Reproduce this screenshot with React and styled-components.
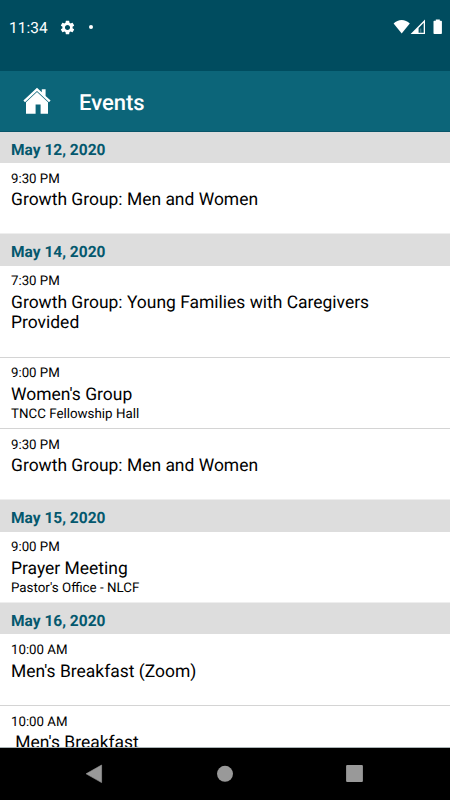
import React from "react";
import styled, { createGlobalStyle } from "styled-components";
import { MdSettings } from "react-icons/md";

const GlobalStyle = createGlobalStyle`
  body {
    margin: 0;
    font-family: Roboto, sans-serif;
    text-rendering: geometricPrecision;
    color: #000000;
    background: #ffffff;
  }
`;

const Screen = styled.div`
  display: flex;
  flex-direction: column;
  width: 450px;
  height: 800px;
  overflow: hidden;
`;

const StatusBar = styled.div`
  display: flex;
  flex: none;
  align-items: center;
  box-sizing: border-box;
  height: 71px;
  padding: 0 8px 17px 9px;
  color: #ffffff;
  background: #004c5f;
`;

const Clock = styled.span`
  width: 49.5px;
  margin-top: 2px;
  font-size: 15.4px;
  letter-spacing: 0.1px;
  line-height: 18px;
`;

const Dot = styled.span`
  width: 4px;
  height: 4px;
  margin-left: 13.5px;
  border-radius: 50%;
  background: #ffffff;
`;

const StatusIcons = styled.svg`
  margin-left: auto;
`;

const AppBar = styled.header`
  display: flex;
  flex: none;
  align-items: center;
  box-sizing: border-box;
  height: 60.6px;
  padding-left: 23px;
  color: #ffffff;
  background: #0c6579;
  border-bottom: 1px solid #085569;
`;

const Title = styled.h1`
  margin: 7px 0 0 28px;
  font-weight: 500;
  font-size: 22px;
  line-height: 26px;
`;

const List = styled.main`
  flex: 1;
  min-height: 0;
  overflow: hidden;
`;

const DateHeader = styled.h2`
  box-sizing: border-box;
  height: 31.3px;
  margin: 0;
  padding: 8.1px 11px 0;
  font-weight: 700;
  font-size: 15.5px;
  line-height: 20px;
  color: #05586e;
  background: #dddddd;
`;

const Event = styled.div`
  box-sizing: border-box;
  height: ${(props) => (props.$tall ? "92px" : "71.4px")};
  padding: 8.8px 11px 0;
  border-bottom: 1px solid ${(props) => (props.$last ? "#eeeeee" : "#d4d4d4")};
`;

const Time = styled.div`
  font-size: 13.25px;
  line-height: 16px;
`;

const Name = styled.div`
  width: 400px;
  margin-top: 2.7px;
  font-size: 17.47px;
  line-height: 20.3px;
  white-space: pre-wrap;
`;

const Place = styled.div`
  margin-top: 2px;
  font-size: 13.35px;
  line-height: 16px;
`;

const NavBar = styled.nav`
  display: flex;
  flex: none;
  justify-content: center;
  height: 53px;
  background: #000000;
  border-top: 1px solid #aab4b6;
  box-sizing: border-box;
`;

const days = [
  {
    date: "May 12, 2020",
    events: [{ time: "9:30 PM", name: "Growth Group: Men and Women" }],
  },
  {
    date: "May 14, 2020",
    events: [
      {
        time: "7:30 PM",
        name: "Growth Group: Young Families with Caregivers Provided",
        tall: true,
      },
      { time: "9:00 PM", name: "Women's Group", place: "TNCC Fellowship Hall" },
      { time: "9:30 PM", name: "Growth Group: Men and Women" },
    ],
  },
  {
    date: "May 15, 2020",
    events: [
      { time: "9:00 PM", name: "Prayer Meeting", place: "Pastor's Office - NLCF" },
    ],
  },
  {
    date: "May 16, 2020",
    events: [
      { time: "10:00 AM", name: "Men's Breakfast (Zoom)" },
      { time: "10:00 AM", name: " Men's Breakfast" },
    ],
  },
];

function HomeIcon() {
  return (
    <svg width="28" height="28" viewBox="0 0 28 28" fill="#ffffff">
      <path d="M14 .8 18.8 5.3V2.2h3.8v6.7L27.6 13.5 26 15.2 14 3.9 2 15.2.4 13.5Z" />
      <path d="M14 5 25 15.3v11.5h-7.4v-9.4h-5v9.4H3V15.3Z" />
    </svg>
  );
}

export default function App() {
  return (
    <Screen>
      <GlobalStyle />
      <StatusBar>
        <Clock>11:34</Clock>
        <MdSettings size={17} />
        <Dot />
        <StatusIcons width="49" height="16" viewBox="0 0 49 16" fill="#ffffff">
          <path d="M.6 4.6C5-.2 12.4-.2 16.8 4.6L8.7 14.6Z" />
          <path
            fillRule="evenodd"
            d="M17.6 15 32 .6v14.4ZM25.6 13.7h5.1V3.8l-5.1 5.1Z"
          />
          <path d="M26.8 9.5h1.6v4.2h-1.6Z" opacity=".25" />
          <path d="M42.8.5h4v1.3h1.3q.8 0 .8.8v11.6q0 .8-.8.8h-6.8q-.8 0-.8-.8V2.6q0-.8.8-.8h1.5Z" />
        </StatusIcons>
      </StatusBar>
      <AppBar>
        <HomeIcon />
        <Title>Events</Title>
      </AppBar>
      <List>
        {days.map((day) => (
          <section key={day.date}>
            <DateHeader>{day.date}</DateHeader>
            {day.events.map((event, index) => (
              <Event
                key={index}
                $tall={event.tall}
                $last={index === day.events.length - 1}
              >
                <Time>{event.time}</Time>
                <Name>{event.name}</Name>
                {event.place && <Place>{event.place}</Place>}
              </Event>
            ))}
          </section>
        ))}
      </List>
      <NavBar>
        <svg width="450" height="52" viewBox="0 748 450 52" fill="#999999">
          <path d="M86.1 773.8 101.6 765v17.6Z" stroke="#999999" strokeWidth=".6" strokeLinejoin="round" />
          <circle cx="225" cy="773.8" r="8" />
          <rect x="346.1" y="765.1" width="16.8" height="16.8" rx="1" />
        </svg>
      </NavBar>
    </Screen>
  );
}
